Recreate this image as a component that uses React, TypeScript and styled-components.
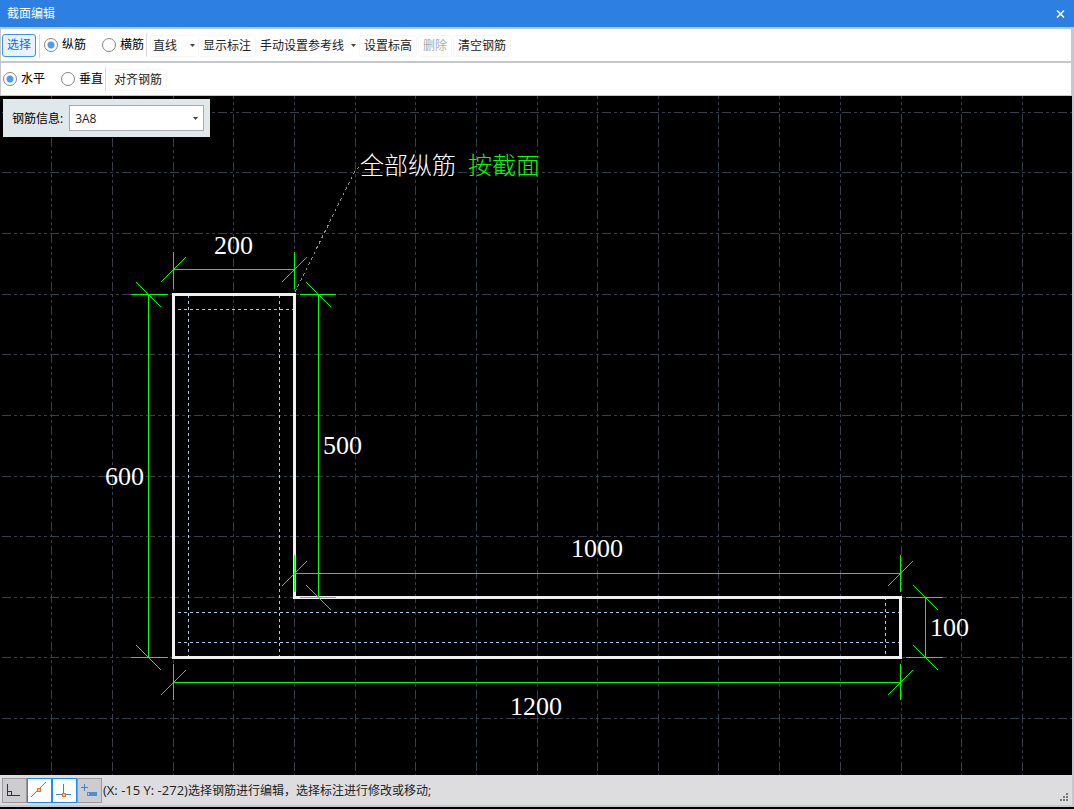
import React, { useState } from 'react';
import styled, { createGlobalStyle, css } from 'styled-components';

const GlobalStyle = createGlobalStyle`
  *, *::before, *::after { box-sizing: border-box; }
  body { margin: 0; background: #000; }
  body, button, select, input {
    font-family: 'Open Sans', 'Noto Sans CJK SC', sans-serif;
    font-size: 12px;
    line-height: 18px;
  }
`;

const Window = styled.div`
  display: flex;
  flex-direction: column;
  min-height: 100vh;
  padding-bottom: 2px;
`;

const TitleBar = styled.header`
  display: flex;
  align-items: center;
  justify-content: space-between;
  height: 27px;
  padding: 0 7px;
  background: #2d7fe2;
  color: #fff;
`;

const Title = styled.h1`
  margin: 0;
  font-size: 12px;
  font-weight: 400;
`;

const CloseButton = styled.button`
  display: flex;
  padding: 2px;
  border: 0;
  background: transparent;
  color: #fff;
`;

const Frame = styled.div`
  flex: 1;
  display: flex;
  flex-direction: column;
  border: solid #c4c8d0;
  border-width: 0 2px 2px 0;
`;

const Toolbar = styled.div<{ $first?: boolean }>`
  display: flex;
  align-items: center;
  height: ${(p) => (p.$first ? 35 : 34)}px;
  padding: 0 0 0 ${(p) => (p.$first ? 1 : 0)}px;
  border: solid #c4c7cc;
  border-width: ${(p) => (p.$first ? '2px 1px 1px 1px' : '1px')};
  background: #fff;
`;

const Separator = styled.span`
  width: 1px;
  height: 24px;
  background: #d8dadd;
`;

const ToolButton = styled.button<{ $active?: boolean; $menu?: boolean }>`
  display: flex;
  align-items: center;
  height: 22px;
  padding: ${(p) => (p.$menu ? '0 1px 0 2px' : '0 4px')};
  border: 1px solid ${(p) => (p.$menu ? 'transparent' : '#f6f6f7')};
  border-radius: 3px;
  background: #fff;
  color: #222;
  white-space: nowrap;
  gap: 7px;
  &:disabled { color: #aaa; }
  ${(p) =>
    p.$active &&
    css`
      height: 23px;
      border-color: #3c94e8;
      background: #e9f3fd;
      color: #0a6fd6;
    `}
`;

const ToolGroup = styled.div`
  display: flex;
  align-items: center;
  gap: 1px;
  padding: 1px 2px 0 3px;
`;

const RadioGroup = styled.div`
  display: flex;
  align-items: center;
  gap: 16px;
  padding: 0 2px;
`;

const RadioLabel = styled.label`
  display: flex;
  align-items: center;
  gap: 4px;
  color: #000;
  white-space: nowrap;
`;

const Radio = styled.input`
  appearance: none;
  width: 14px;
  height: 14px;
  margin: 0;
  border: 1px solid #858585;
  border-radius: 50%;
  background: #fff;
  &:checked {
    background: radial-gradient(circle, #4a9bf5 3px, #fff 4px);
  }
`;

const SelectBox = styled.div<{ $field?: boolean }>`
  display: grid;
  align-items: center;
  width: ${(p) => (p.$field ? 135 : 47)}px;
  height: ${(p) => (p.$field ? 26 : 22)}px;
  border: 1px solid ${(p) => (p.$field ? '#a8abae' : '#f6f6f7')};
  border-right-color: ${(p) => (p.$field ? '#a8abae' : 'transparent')};
  background: #fff;
  > * { grid-area: 1 / 1; }
  > svg {
    justify-self: end;
    margin-right: ${(p) => (p.$field ? 5 : 1)}px;
    pointer-events: none;
  }
`;

const Select = styled.select<{ $field?: boolean }>`
  appearance: none;
  width: 100%;
  height: 100%;
  padding: ${(p) => (p.$field ? '2px 5px 0' : '0 2px')};
  border: 0;
  background: transparent;
  color: #222;
`;

const Stage = styled.main`
  position: relative;
  flex: 1;
  display: flex;
  min-height: 640px;
  background: #000;
`;

const Drawing = styled.svg`
  flex: 1;
  width: 100%;
  font-family: 'Liberation Serif', 'Noto Sans CJK SC', serif;
  font-size: 26px;
  fill: none;
`;

const BarInfo = styled.div`
  position: absolute;
  top: 3px;
  left: 3px;
  display: flex;
  align-items: center;
  gap: 6px;
  padding: 6px 6px 6px 9px;
  background: #dfe8ea;
  color: #000;
`;

const FieldLabel = styled.label`
  padding-top: 2px;
`;

const StatusBar = styled.footer`
  display: flex;
  align-items: center;
  height: 30px;
  padding: 0 7px 0 2px;
  background: #dddde0;
  color: #222;
`;

const SnapButton = styled.button<{ $on?: boolean }>`
  display: flex;
  width: 25px;
  height: 25px;
  padding: 0;
  border: 1px solid ${(p) => (p.$on ? '#1e8cf5' : '#9a9a9e')};
  background: ${(p) => (p.$on ? '#fff' : '#cdcdd0')};
`;

const StatusText = styled.output`
  flex: 1;
  padding: 1px 0 0 1px;
`;

const Coordinates = styled.span`
  font-size: 13px;
`;

const Grip = styled.svg`
  align-self: flex-end;
  margin: 0 -3px 4px 0;
`;

const Arrow = () => (
  <svg width="5" height="3" viewBox="0 0 5 3" aria-hidden="true">
    <path d="M0 0H5L2.5 3Z" fill="#444" />
  </svg>
);

const GRID_X = [51, 112, 173, 233, 294, 355, 415, 476, 537, 597, 658, 718, 779, 840, 901, 961, 1022];
const GRID_Y = [16, 76, 137, 198, 258, 319, 380, 440, 501, 561, 622];

type Line = [number, number, number, number];

/* Dimension lines with their extension ticks, in canvas coordinates. */
const DIMENSIONS: Line[] = [
  [173, 173, 294, 173], [173, 156, 173, 193], [294, 156, 294, 193],
  [148, 198, 148, 561], [131, 198, 168, 198], [131, 561, 168, 561],
  [318, 198, 318, 501], [300, 198, 336, 198], [300, 501, 336, 501],
  [294, 477, 900, 477], [294, 459, 294, 496], [900, 459, 900, 496],
  [173, 586, 900, 586], [173, 568, 173, 604], [900, 568, 900, 604],
  [925, 501, 925, 561], [906, 501, 943, 501], [906, 561, 943, 561],
];

const RISING: [number, number][] = [[173, 173], [294, 173], [294, 477], [900, 477], [173, 586], [900, 586]];
const FALLING: [number, number][] = [[148, 198], [148, 561], [318, 198], [318, 501], [925, 501], [925, 561]];

const COVER: Line[] = [
  [188, 199, 188, 561], [279, 199, 279, 561], [885, 501, 885, 561],
  [178, 213, 295, 213], [178, 516, 901, 516], [178, 546, 901, 546],
];

const LABELS: [string, number, number][] = [
  ['200', 214, 158], ['600', 105, 389], ['500', 323, 358],
  ['1000', 571, 461], ['100', 930, 540], ['1200', 510, 619],
];

/* Half a pixel across the line keeps a one-pixel stroke on the pixel grid. */
const AxisLine = ({ at: [x1, y1, x2, y2] }: { at: Line }) => {
  const dx = x1 === x2 ? 0.5 : 0;
  const dy = y1 === y2 ? 0.5 : 0;
  return <line x1={x1 + dx} y1={y1 + dy} x2={x2 + dx} y2={y2 + dy} />;
};

const Section = () => (
  <Drawing role="img" aria-label="截面">
    <g stroke="#363e4b" strokeDasharray="9 3 3 3 3 3" shapeRendering="crispEdges">
      {GRID_X.map((x) => <line key={x} x1={x + 0.5} x2={x + 0.5} y1="-6" y2="100%" />)}
      {GRID_Y.map((y) => <line key={y} x1="2" x2="100%" y1={y + 0.5} y2={y + 0.5} />)}
    </g>
    <g stroke="#a6caf0" strokeDasharray="3 3" shapeRendering="crispEdges">
      {COVER.map((l) => <AxisLine key={l.join()} at={l} />)}
    </g>
    <path d="M173.5 198.5H294.5V501.5H900.5V561.5H173.5Z" stroke="#f0f0f0" strokeWidth="3" shapeRendering="crispEdges" />
    <g stroke="#00ff00" shapeRendering="crispEdges">
      {DIMENSIONS.map((l) => <AxisLine key={l.join()} at={l} />)}
      {RISING.map(([x, y]) => <line key={`r${x}-${y}`} x1={x - 12} y1={y + 13} x2={x + 13} y2={y - 12} />)}
      {FALLING.map(([x, y]) => <line key={`f${x}-${y}`} x1={x - 12} y1={y - 12} x2={x + 13} y2={y + 13} />)}
    </g>
    <path d="M295 196L355 75L361 69" stroke="#909090" strokeDasharray="3 3" shapeRendering="crispEdges" />
    <g fill="#fff">
      {LABELS.map(([t, x, y]) => <text key={t} x={x} y={y}>{t}</text>)}
    </g>
    <g fontSize="24" fontWeight="300">
      <text x="360" y="78" fill="#fff">全部纵筋</text>
      <text x="468" y="78" fill="#00ff00">按截面</text>
    </g>
  </Drawing>
);

const SnapMark = ({ x, y }: { x: number; y: number }) => (
  <>
    <rect x={x} y={y} width="4" height="4" fill="#ea7125" />
    <rect x={x + 1} y={y + 1} width="2" height="2" fill="#f8c79c" />
  </>
);

export default function App() {
  const [bar, setBar] = useState('v');
  const [dir, setDir] = useState('h');
  return (
    <>
      <GlobalStyle />
      <Window>
        <TitleBar>
          <Title>截面编辑</Title>
          <CloseButton aria-label="关闭">
            <svg width="9" height="8" viewBox="0 0 9 8"><path d="M1 .5L8 7.5M8 .5L1 7.5" stroke="currentColor" strokeWidth="1.5" /></svg>
          </CloseButton>
        </TitleBar>
        <Frame>
          <Toolbar $first>
            <ToolButton $active>选择</ToolButton>
            <ToolGroup><Separator /></ToolGroup>
            <RadioGroup>
              <RadioLabel><Radio type="radio" name="bar" checked={bar === 'v'} onChange={() => setBar('v')} />纵筋</RadioLabel>
              <RadioLabel><Radio type="radio" name="bar" checked={bar === 'h'} onChange={() => setBar('h')} />横筋</RadioLabel>
            </RadioGroup>
            <Separator />
            <ToolGroup>
              <SelectBox>
                <Select aria-label="线型"><option>直线</option></Select>
                <Arrow />
              </SelectBox>
              <ToolButton>显示标注</ToolButton>
              <ToolButton $menu aria-haspopup="menu">手动设置参考线<Arrow /></ToolButton>
              <ToolButton>设置标高</ToolButton>
              <ToolButton disabled>删除</ToolButton>
              <ToolButton>清空钢筋</ToolButton>
            </ToolGroup>
          </Toolbar>
          <Toolbar>
            <RadioGroup>
              <RadioLabel><Radio type="radio" name="dir" checked={dir === 'h'} onChange={() => setDir('h')} />水平</RadioLabel>
              <RadioLabel><Radio type="radio" name="dir" checked={dir === 'v'} onChange={() => setDir('v')} />垂直</RadioLabel>
            </RadioGroup>
            <Separator />
            <ToolGroup><ToolButton>对齐钢筋</ToolButton></ToolGroup>
          </Toolbar>
          <Stage>
            <Section />
            <BarInfo>
              <FieldLabel htmlFor="bar-info">钢筋信息:</FieldLabel>
              <SelectBox $field>
                <Select $field id="bar-info"><option>3A8</option></Select>
                <Arrow />
              </SelectBox>
            </BarInfo>
          </Stage>
          <StatusBar>
            <SnapButton aria-label="正交">
              <svg width="23" height="23" viewBox="0 0 23 23" fill="none" stroke="#333" shapeRendering="crispEdges"><path d="M4.5 5V16.5H17M4.5 12.5H8.5V16" /></svg>
            </SnapButton>
            <SnapButton $on aria-label="中点">
              <svg width="23" height="23" viewBox="0 0 23 23" fill="none"><path d="M3 18L18 3" stroke="#3f83cf" /><SnapMark x={9} y={9} /></svg>
            </SnapButton>
            <SnapButton $on aria-label="垂足">
              <svg width="23" height="23" viewBox="0 0 23 23" fill="none"><path d="M3 15.5H18M10.5 5V15" stroke="#3f83cf" /><SnapMark x={9} y={14} /></svg>
            </SnapButton>
            <SnapButton aria-label="动态输入">
              <svg width="23" height="23" viewBox="0 0 23 23" fill="none"><path d="M3 8.500H10M6.500 5V12" stroke="#3f83cf" /><rect x="9" y="13" width="10" height="4" fill="#4a8fd8" /><path d="M10.500 14V16" stroke="#cdcdd0" /></svg>
            </SnapButton>
            <StatusText><Coordinates>(X: -15 Y: -272)</Coordinates>选择钢筋进行编辑，选择标注进行修改或移动;</StatusText>
            <Grip width="8" height="8" viewBox="0 0 8 8" fill="#77797f">
              <path d="M6 0h2v2H6zM3 3h2v2H3zM6 3h2v2H6zM0 6h2v2H0zM3 6h2v2H3zM6 6h2v2H6z" />
            </Grip>
          </StatusBar>
        </Frame>
      </Window>
    </>
  );
}
